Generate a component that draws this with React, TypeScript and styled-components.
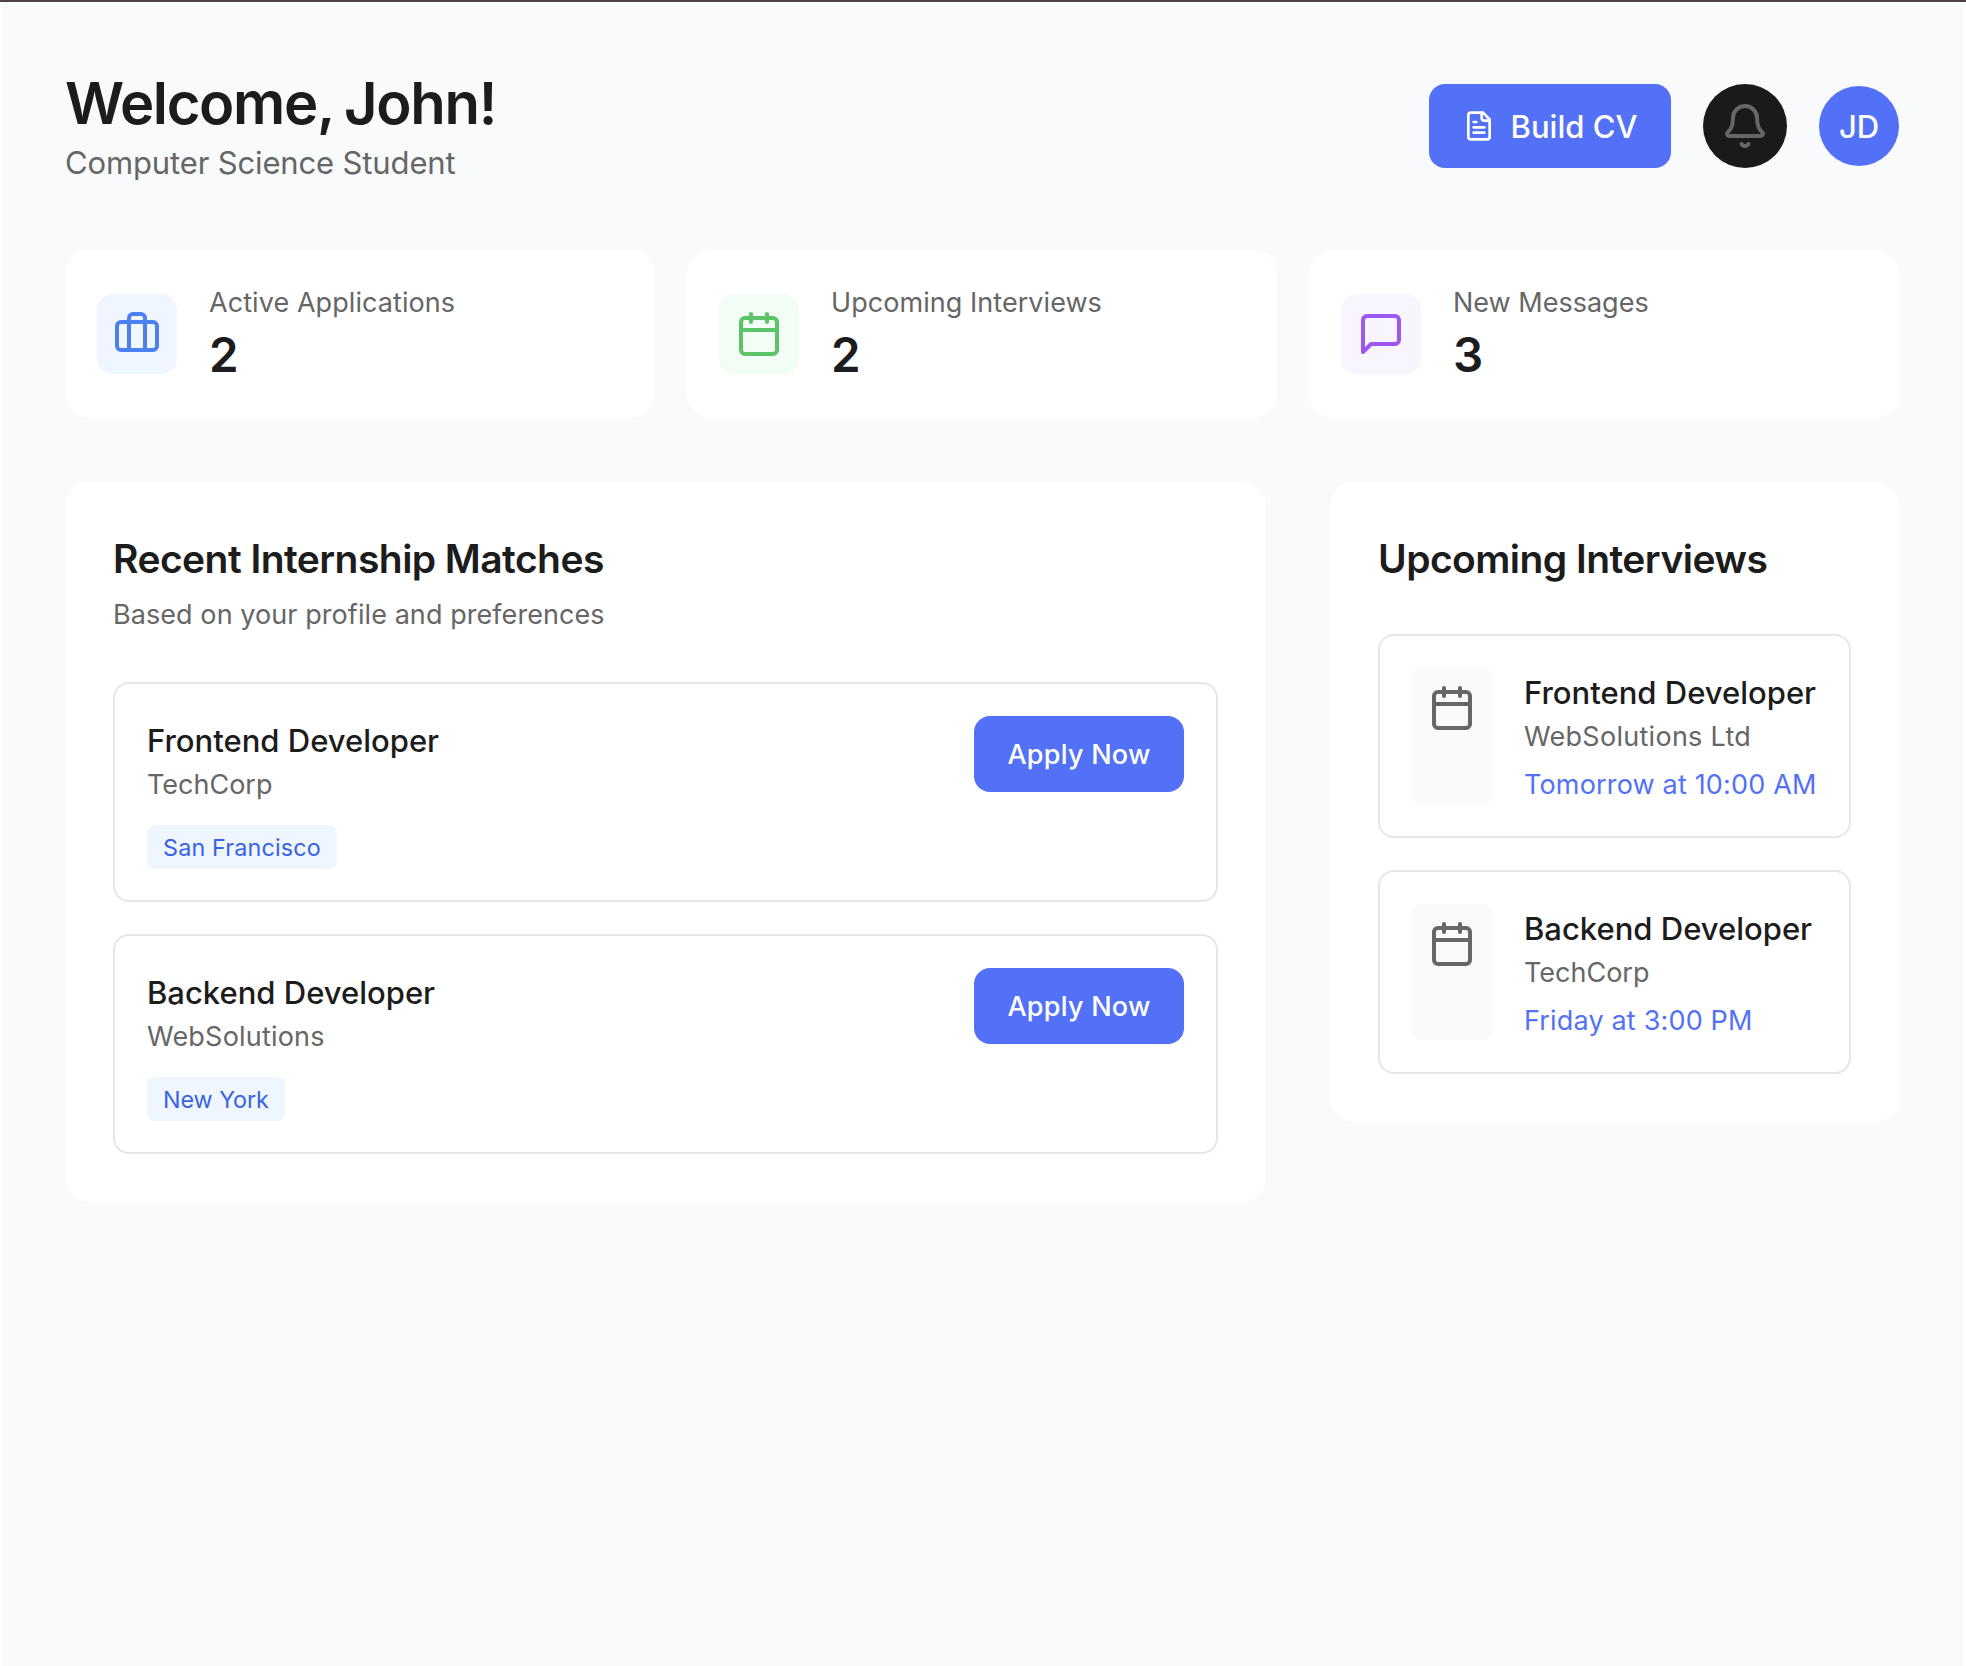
import React from 'react';
import styled, { createGlobalStyle } from 'styled-components';

const color = {
  page: '#f8fafb',
  ink: '#1c1c1c',
  muted: '#666666',
  primary: '#5371f7',
  border: '#e5e6eb',
};

const GlobalStyle = createGlobalStyle`
  *, *::before, *::after { box-sizing: border-box; }
  body {
    margin: 0;
    background: #ffffff;
    font-family: Inter, "Liberation Sans", sans-serif;
    -webkit-font-smoothing: antialiased;
  }
  h1, h2, h3, p { margin: 0; }
`;

const Frame = styled.div`
  min-height: 1666px;
  border-top: 2px solid #4b424a;
  display: flex;
`;

const Page = styled.main`
  flex: 1;
  margin: 0 3px 0 1px;
  padding: 64px;
  background: ${color.page};
  color: ${color.ink};
`;

interface TextProps {
  $track?: number;
}

const Header = styled.header`
  display: flex;
  justify-content: space-between;
  align-items: center;
  height: 120px;
  margin-bottom: 64px;
`;

const Title = styled.h1`
  font-size: 58px;
  font-weight: 600;
  line-height: 74px;
  letter-spacing: -1.35px;
  word-spacing: -2px;
`;

const Subtitle = styled.p`
  font-size: 31px;
  line-height: 46px;
  letter-spacing: -0.14px;
  color: ${color.muted};
`;

const Actions = styled.div`
  display: flex;
  align-items: center;
  gap: 32px;
`;

const Button = styled.button<{ $large?: boolean }>`
  display: flex;
  align-items: center;
  justify-content: center;
  gap: 16px;
  flex: none;
  width: ${p => (p.$large ? 242 : 210)}px;
  height: ${p => (p.$large ? 84 : 76)}px;
  padding: 0;
  border: 0;
  border-radius: 16px;
  background: ${color.primary};
  color: #ffffff;
  font-family: inherit;
  font-size: ${p => (p.$large ? 31 : 27)}px;
  font-weight: 450;
  letter-spacing: ${p => (p.$large ? 0 : 0.25)}px;
  white-space: nowrap;
`;

const BellButton = styled.button`
  display: flex;
  align-items: center;
  justify-content: center;
  width: 84px;
  height: 84px;
  padding: 0;
  border: 0;
  border-radius: 50%;
  background: #1a1a1a;
  color: ${color.muted};
`;

const Avatar = styled.div`
  display: flex;
  align-items: center;
  justify-content: center;
  width: 80px;
  height: 80px;
  border-radius: 50%;
  background: ${color.primary};
  color: #ffffff;
  font-size: 31px;
  font-weight: 450;
`;

const Stats = styled.section`
  display: grid;
  grid-template-columns: repeat(3, 1fr);
  gap: 32px;
  margin-bottom: 64px;
`;

const StatCard = styled.article`
  display: flex;
  align-items: center;
  gap: 32px;
  height: 168px;
  padding: 32px;
  border-radius: 24px;
  background: #ffffff;
`;

const StatIcon = styled.div<{ $bg: string; $fg: string }>`
  display: flex;
  padding: 16px;
  border-radius: 16px;
  background: ${p => p.$bg};
  color: ${p => p.$fg};
`;

const StatLabel = styled.p<TextProps>`
  font-size: 27px;
  line-height: 41px;
  letter-spacing: ${p => p.$track ?? 0}px;
  color: ${color.muted};
`;

const StatValue = styled.p`
  font-size: 47.5px;
  font-weight: 600;
  line-height: 63px;
`;

const Columns = styled.div`
  display: grid;
  grid-template-columns: 1fr 569px;
  align-items: start;
  gap: 64px;
`;

const Panel = styled.section`
  padding: 48px;
  border-radius: 24px;
  background: #ffffff;
`;

const PanelHeader = styled.div`
  display: flex;
  flex-direction: column;
  gap: 5px;
  margin-bottom: 46px;
`;

const PanelTitle = styled.h2`
  font-size: 39px;
  font-weight: 600;
  line-height: 58px;
  letter-spacing: -0.55px;
`;

const PanelText = styled.p`
  font-size: 27px;
  line-height: 43px;
  letter-spacing: 0.07px;
  color: ${color.muted};
`;

const List = styled.div`
  display: flex;
  flex-direction: column;
  gap: 32px;
`;

const Item = styled.article<{ $spread?: boolean }>`
  display: flex;
  justify-content: ${p => (p.$spread ? 'space-between' : 'flex-start')};
  align-items: ${p => (p.$spread ? 'flex-start' : 'stretch')};
  gap: 32px;
  height: ${p => (p.$spread ? 220 : 204)}px;
  padding: 32px;
  border: 2px solid ${color.border};
  border-radius: 16px;
`;

const Role = styled.h3`
  font-size: 31px;
  font-weight: 500;
  line-height: 50px;
  white-space: nowrap;
`;

const Company = styled.p<TextProps>`
  font-size: 27px;
  line-height: 37px;
  letter-spacing: ${p => p.$track ?? 0}px;
  color: ${color.muted};
`;

const When = styled.p`
  margin-top: 10px;
  font-size: 27px;
  line-height: 40px;
  letter-spacing: 0.17px;
  color: ${color.primary};
  white-space: nowrap;
`;

const Tag = styled.span<TextProps>`
  display: inline-flex;
  align-items: center;
  height: 44px;
  margin-top: 22px;
  padding: 0 16px;
  border-radius: 8px;
  background: #f0f6ff;
  color: #3763e5;
  font-size: 23.3px;
  letter-spacing: ${p => p.$track ?? 0}px;
`;

const DateIcon = styled.div`
  flex: none;
  padding: 16px;
  border-radius: 8px;
  background: #f9fafb;
  color: ${color.muted};
  line-height: 0;
`;

const Glyph = styled.svg<{ $size: number }>`
  display: block;
  flex: none;
  width: ${p => p.$size}px;
  height: ${p => p.$size}px;
  fill: none;
  stroke: currentColor;
  stroke-width: 2;
  stroke-linecap: round;
  stroke-linejoin: round;
`;

const icons = {
  file: [
    'M15 2H6a2 2 0 0 0-2 2v16a2 2 0 0 0 2 2h12a2 2 0 0 0 2-2V7Z',
    'M14 2v4a2 2 0 0 0 2 2h4',
    'M10 9H8',
    'M16 13H8',
    'M16 17H8',
  ],
  bell: [
    'M10.268 21a2 2 0 0 0 3.464 0',
    'M3.262 15.326A1 1 0 0 0 4 17h16a1 1 0 0 0 .74-1.673C19.41 13.956 18 12.499 18 8A6 6 0 0 0 6 8c0 4.499-1.411 5.956-2.738 7.326',
  ],
  briefcase: [
    'M16 20V4a2 2 0 0 0-2-2h-4a2 2 0 0 0-2 2v16',
    'M4 6h16a2 2 0 0 1 2 2v10a2 2 0 0 1-2 2H4a2 2 0 0 1-2-2V8a2 2 0 0 1 2-2z',
  ],
  calendar: [
    'M8 2v4',
    'M16 2v4',
    'M5 4h14a2 2 0 0 1 2 2v14a2 2 0 0 1-2 2H5a2 2 0 0 1-2-2V6a2 2 0 0 1 2-2z',
    'M3 10h18',
  ],
  message: ['M21 15a2 2 0 0 1-2 2H7l-4 4V5a2 2 0 0 1 2-2h14a2 2 0 0 1 2 2z'],
};

function Icon({ name, size = 48 }: { name: keyof typeof icons; size?: number }) {
  return (
    <Glyph viewBox="0 0 24 24" $size={size} aria-hidden="true">
      {icons[name].map(d => (
        <path key={d} d={d} />
      ))}
    </Glyph>
  );
}

const stats = [
  { icon: 'briefcase', label: 'Active Applications', value: 2, bg: '#f0f6ff', fg: '#4c80ee', track: 0.07 },
  { icon: 'calendar', label: 'Upcoming Interviews', value: 2, bg: '#f2fdf5', fg: '#5dc369', track: 0.05 },
  { icon: 'message', label: 'New Messages', value: 3, bg: '#f8f5fe', fg: '#9d58ef', track: 0 },
] as const;

const matches = [
  { role: 'Frontend Developer', company: 'TechCorp', city: 'San Francisco', track: 0, cityTrack: 0.18 },
  { role: 'Backend Developer', company: 'WebSolutions', city: 'New York', track: 0.2, cityTrack: -0.05 },
];

const interviews = [
  { role: 'Frontend Developer', company: 'WebSolutions Ltd', when: 'Tomorrow at 10:00 AM', track: 0.28 },
  { role: 'Backend Developer', company: 'TechCorp', when: 'Friday at 3:00 PM', track: 0 },
];

export default function App() {
  return (
    <Frame>
      <GlobalStyle />
      <Page>
        <Header>
          <div>
            <Title>Welcome, John!</Title>
            <Subtitle>Computer Science Student</Subtitle>
          </div>
          <Actions>
            <Button $large>
              <Icon name="file" size={32} />
              Build CV
            </Button>
            <BellButton aria-label="Notifications">
              <Icon name="bell" />
            </BellButton>
            <Avatar>JD</Avatar>
          </Actions>
        </Header>

        <Stats>
          {stats.map(s => (
            <StatCard key={s.label}>
              <StatIcon $bg={s.bg} $fg={s.fg}>
                <Icon name={s.icon} />
              </StatIcon>
              <div>
                <StatLabel $track={s.track}>{s.label}</StatLabel>
                <StatValue>{s.value}</StatValue>
              </div>
            </StatCard>
          ))}
        </Stats>

        <Columns>
          <Panel>
            <PanelHeader>
              <PanelTitle>Recent Internship Matches</PanelTitle>
              <PanelText>Based on your profile and preferences</PanelText>
            </PanelHeader>
            <List>
              {matches.map(m => (
                <Item key={m.role} $spread>
                  <div>
                    <Role>{m.role}</Role>
                    <Company $track={m.track}>{m.company}</Company>
                    <Tag $track={m.cityTrack}>{m.city}</Tag>
                  </div>
                  <Button>Apply Now</Button>
                </Item>
              ))}
            </List>
          </Panel>

          <Panel>
            <PanelHeader>
              <PanelTitle>Upcoming Interviews</PanelTitle>
            </PanelHeader>
            <List>
              {interviews.map(i => (
                <Item key={i.role}>
                  <DateIcon>
                    <Icon name="calendar" />
                  </DateIcon>
                  <div>
                    <Role>{i.role}</Role>
                    <Company $track={i.track}>{i.company}</Company>
                    <When>{i.when}</When>
                  </div>
                </Item>
              ))}
            </List>
          </Panel>
        </Columns>
      </Page>
    </Frame>
  );
}
